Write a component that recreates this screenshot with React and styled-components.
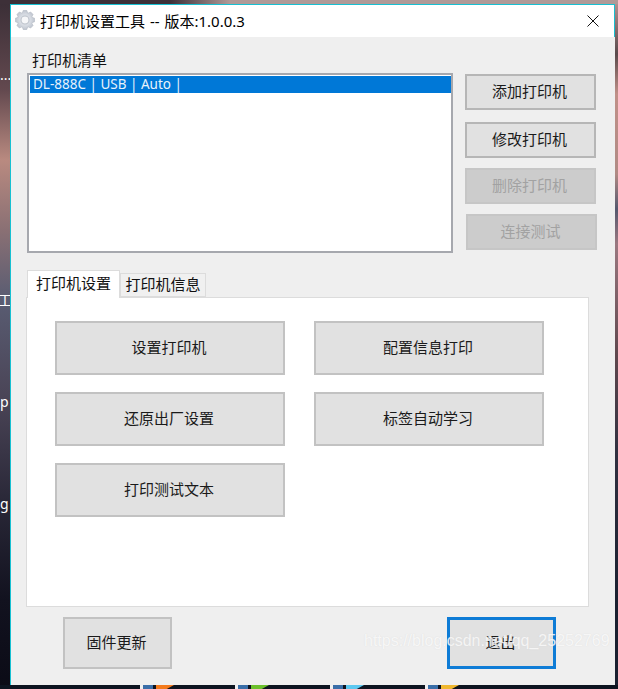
import styled, { createGlobalStyle } from "styled-components";

const Global = createGlobalStyle`
  html, body {
    margin: 0;
    padding: 0;
    overflow: hidden;
  }
`;

const Desktop = styled.div`
  position: relative;
  width: 618px;
  height: 689px;
  overflow: hidden;
  box-sizing: border-box;
  padding: 4px 3px 0 10px;
  display: flex;
  flex-direction: column;
  font-family: "Noto Sans", "Noto Sans CJK SC", sans-serif;
  background:
    linear-gradient(90deg, #3d3038 0, #3d3038 170px, #b09a98 230px, #b09a98 100%) top / 100% 4px no-repeat,
    linear-gradient(180deg, #3a2e36 0, #63494f 90px, #b98a80 160px, #8a7074 230px, #595c72 300px, #4a4456 400px, #2a2838 500px, #12121f 600px, #0b0b16 689px);
`;

const RightEdge = styled.div`
  position: absolute;
  top: 4px;
  right: 0;
  bottom: 4px;
  width: 4px;
  background: linear-gradient(180deg, #b09090 0, #5a4a4c 50px, #c09088 90px, #b08a84 170px, #55586e 205px, #9a7880 240px, #60484e 350px, #303040 450px, #1a2030 600px, #1a2030 100%);
`;

const DesktopLabel = styled.span`
  position: absolute;
  left: ${(props) => props.$left}px;
  top: ${(props) => props.$top}px;
  color: #fff;
  font-size: 14px;
  line-height: 18px;
`;

const Window = styled.div`
  position: relative;
  width: 605px;
  height: 681px;
  flex: none;
  box-sizing: border-box;
  display: flex;
  flex-direction: column;
  background: #efefef;
  border-left: 1px solid #17c0d2;
`;

const TitleBar = styled.div`
  height: 33px;
  flex: none;
  box-sizing: border-box;
  display: flex;
  align-items: center;
  gap: 5px;
  padding: 0 15px 2px 4px;
  background: #fff;
  border-top: 1px solid #17c0d2;
  border-right: 1px solid #17c0d2;
  font-size: 15px;
  color: #000;

  & > svg:last-child {
    margin-top: 2px;
  }
`;

const TitleText = styled.span`
  flex: 1;
  white-space: nowrap;
  word-spacing: 1px;
`;

const Body = styled.div`
  flex: 1;
  display: flex;
  flex-direction: column;
  padding: 15px 0 0 16px;
`;

const TopRow = styled.div`
  display: flex;
  gap: 12px;
`;

const ListLabel = styled.div`
  height: 21px;
  padding-left: 5px;
  font-size: 15px;
  line-height: 16px;
  color: #111;
`;

const ListBox = styled.div`
  width: 426px;
  height: 180px;
  box-sizing: border-box;
  padding: 1px 0 1px 1px;
  background: #fff;
  border: 2px solid #a6a8ae;
`;

const ListRow = styled.div`
  height: 17px;
  padding-left: 3px;
  background: #0078d7;
  color: #e8f2fb;
  font-size: 13.5px;
  line-height: 17px;
  white-space: nowrap;
`;

const SideColumn = styled.div`
  display: flex;
  flex-direction: column;
  gap: 10px;
  padding-top: 22px;

  & > :first-child {
    margin-bottom: 2px;
  }

  & > :last-child {
    margin-left: 1px;
  }
`;

const Button = styled.button`
  width: ${(props) => props.$w}px;
  height: ${(props) => props.$h}px;
  padding: 0 2px 4px 0;
  box-sizing: border-box;
  background: #e1e1e1;
  border: 2px solid ${(props) => (props.$soft ? "#c2c2c2" : "#b6b6b6")};
  border-radius: 0;
  color: #1a1a1a;
  font-family: inherit;
  font-size: 15px;

  &:disabled {
    background: #cccccc;
    border-color: #c6c6c6;
    color: #a2a2a2;
  }
`;

const DefaultButton = styled(Button)`
  border: 3px solid #0e7cd6;
`;

const Tabs = styled.div`
  display: flex;
  align-items: flex-end;
  margin-top: 17px;
  height: 27px;
`;

const Tab = styled.div`
  box-sizing: border-box;
  display: flex;
  align-items: center;
  justify-content: center;
  width: ${(props) => (props.$active ? 93 : 86)}px;
  height: ${(props) => (props.$active ? 28 : 24)}px;
  margin-bottom: ${(props) => (props.$active ? -1 : 0)}px;
  padding-bottom: ${(props) => (props.$active ? 4 : 3)}px;
  background: ${(props) => (props.$active ? "#fff" : "#f0f0f0")};
  border: 1px solid #dcdcdc;
  border-bottom: ${(props) => (props.$active ? "none" : "1px solid #dcdcdc")};
  position: relative;
  z-index: ${(props) => (props.$active ? 1 : 0)};
  font-size: 15px;
  color: #111;
`;

const Panel = styled.div`
  width: 563px;
  height: 310px;
  box-sizing: border-box;
  margin-left: -1px;
  padding: 23px 0 0 28px;
  background: #fff;
  border: 1px solid #dcdcdc;
  display: grid;
  grid-template-columns: 230px 230px;
  grid-auto-rows: 54px;
  column-gap: 29px;
  row-gap: 17px;
`;

const Footer = styled.div`
  display: flex;
  gap: 275px;
  margin-top: 10px;
  padding-left: 36px;
`;

const Watermark = styled.div`
  position: absolute;
  left: 364px;
  top: 631px;
  font-family: "Liberation Sans", sans-serif;
  font-size: 16px;
  line-height: 20px;
  color: rgba(255, 255, 255, 0.75);
  text-shadow: 0 0 1px rgba(205, 205, 205, 0.6);
  white-space: nowrap;
`;

const Taskbar = styled.div`
  position: absolute;
  left: 0;
  right: 0;
  bottom: 0;
  height: 4px;
  display: flex;
  padding-left: 140px;
  background: #0d1420;
`;

const TaskItem = styled.div`
  width: 95px;
  flex: none;
  display: flex;
`;

const TaskBadge = styled.i`
  width: 10px;
  margin-right: 3px;
  background: #3a6ea8;
  border-left: 3px solid #f0f0f0;
`;

const TaskGlyph = styled.i`
  width: 18px;
  background: ${(props) => props.$color};
  clip-path: polygon(0 0, 100% 0, 60% 100%, 0 100%);
`;

// title bar gear, teeth are worked out instead of typed by hand
const gearPath = (() => {
  const teeth = 8;
  const pts = [];
  for (let i = 0; i < teeth; i++) {
    const a = (i / teeth) * Math.PI * 2;
    const step = Math.PI / teeth;
    [
      [7.4, a - step * 0.95],
      [9.8, a - step * 0.45],
      [9.8, a + step * 0.45],
      [7.4, a + step * 0.95],
    ].forEach(([r, t]) => {
      pts.push(`${(10 + r * Math.cos(t)).toFixed(2)} ${(10 + r * Math.sin(t)).toFixed(2)}`);
    });
  }
  return `M${pts.join("L")}Z`;
})();

function GearIcon() {
  return (
    <svg width="20" height="20" viewBox="0 0 20 20">
      <defs>
        <radialGradient id="gearFill" cx="50%" cy="50%" r="55%">
          <stop offset="0%" stopColor="#f2f4f7" />
          <stop offset="60%" stopColor="#d2d7df" />
          <stop offset="100%" stopColor="#b9bfca" />
        </radialGradient>
      </defs>
      <path d={gearPath} fill="url(#gearFill)" stroke="#b4bac4" strokeWidth="0.6" />
      <circle cx="10" cy="10" r="4" fill="#f6f7f9" stroke="#bcc2cb" strokeWidth="1.1" />
    </svg>
  );
}

function CloseIcon() {
  return (
    <svg width="12" height="12" viewBox="0 0 12 12">
      <path d="M0.5 0.5L11.5 11.5M11.5 0.5L0.5 11.5" stroke="#111" strokeWidth="1" fill="none" />
    </svg>
  );
}

const taskColors = ["#f47a1c", "#6cc02c", "#5cc8f0", "#f0b830"];

function App() {
  return (
    <Desktop>
      <Global />
      <RightEdge />
      <DesktopLabel $left={0} $top={66}>...</DesktopLabel>
      <DesktopLabel $left={-2} $top={291}>工</DesktopLabel>
      <DesktopLabel $left={0} $top={393}>p</DesktopLabel>
      <DesktopLabel $left={0} $top={495}>g</DesktopLabel>
      <Window>
        <TitleBar>
          <GearIcon />
          <TitleText>打印机设置工具 -- 版本:1.0.0.3</TitleText>
          <CloseIcon />
        </TitleBar>
        <Body>
          <TopRow>
            <div>
              <ListLabel>打印机清单</ListLabel>
              <ListBox>
                <ListRow>DL-888C | USB | Auto |</ListRow>
              </ListBox>
            </div>
            <SideColumn>
              <Button $w={131} $h={36}>添加打印机</Button>
              <Button $w={131} $h={36}>修改打印机</Button>
              <Button $w={131} $h={36} disabled>删除打印机</Button>
              <Button $w={131} $h={36} disabled>连接测试</Button>
            </SideColumn>
          </TopRow>
          <Tabs>
            <Tab $active>打印机设置</Tab>
            <Tab>打印机信息</Tab>
          </Tabs>
          <Panel>
            <Button $soft $w={230} $h={54}>设置打印机</Button>
            <Button $soft $w={230} $h={54}>配置信息打印</Button>
            <Button $soft $w={230} $h={54}>还原出厂设置</Button>
            <Button $soft $w={230} $h={54}>标签自动学习</Button>
            <Button $soft $w={230} $h={54}>打印测试文本</Button>
          </Panel>
          <Footer>
            <Button $soft $w={109} $h={52}>固件更新</Button>
            <DefaultButton $w={109} $h={52}>退出</DefaultButton>
          </Footer>
        </Body>
      </Window>
      <Watermark>https://blog.csdn.net/qq_25252769</Watermark>
      <Taskbar>
        {taskColors.map((color) => (
          <TaskItem key={color}>
            <TaskBadge />
            <TaskGlyph $color={color} />
          </TaskItem>
        ))}
      </Taskbar>
    </Desktop>
  );
}

export default App;
